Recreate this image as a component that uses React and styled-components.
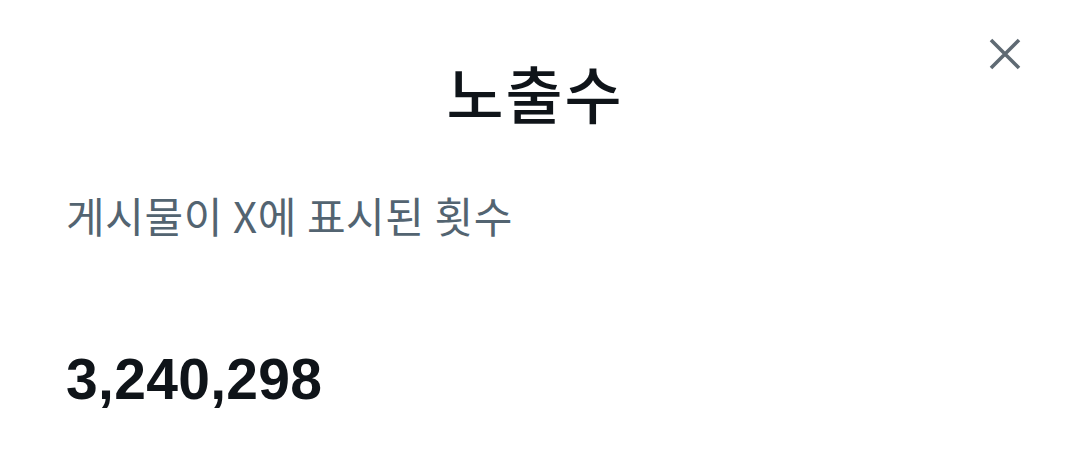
import React from 'react'
import styled, { createGlobalStyle } from 'styled-components'

const GlobalStyle = createGlobalStyle`
  html, body {
    margin: 0;
    padding: 0;
    background: #ffffff;
  }
  body {
    font-family: "Noto Sans CJK KR", "Noto Sans", sans-serif;
    color: #0f1419;
  }
`

const Sheet = styled.section`
  position: relative;
  width: 1070px;
  height: 467px;
  box-sizing: border-box;
  padding: 47px 66px 0;
  display: flex;
  flex-direction: column;
`

const Title = styled.h1`
  margin: 0;
  text-align: center;
  font-size: 62px;
  font-weight: 500;
  letter-spacing: 2px;
  line-height: 90px;
  color: #0f1419;
`

const CloseButton = styled.button`
  position: absolute;
  top: 36px;
  right: 47px;
  width: 36px;
  height: 36px;
  padding: 0;
  border: none;
  background: transparent;
  display: flex;
  align-items: center;
  justify-content: center;
  cursor: pointer;
`

const Description = styled.p`
  margin: 50px 0 0;
  font-size: 42px;
  font-weight: 400;
  letter-spacing: 0.6px;
  line-height: 56px;
  color: #536471;
`

const Count = styled.div`
  margin-top: 104px;
  font-family: "Liberation Sans", Arial, sans-serif;
  font-size: 57px;
  font-weight: 700;
  letter-spacing: 0.3px;
  line-height: 64px;
  color: #0f1419;
`

const CloseIcon = () => (
  <svg width="36" height="36" viewBox="0 0 36 36" aria-hidden="true">
    <path d="M4 4 L32 32 M32 4 L4 32" stroke="#5f6a73" strokeWidth="3.6" fill="none" />
  </svg>
)

const App = () => {
  return (
    <>
      <GlobalStyle />
      <Sheet>
        <CloseButton aria-label="닫기">
          <CloseIcon />
        </CloseButton>
        <Title>노출수</Title>
        <Description>게시물이 X에 표시된 횟수</Description>
        <Count>3,240,298</Count>
      </Sheet>
    </>
  )
}

export default App
